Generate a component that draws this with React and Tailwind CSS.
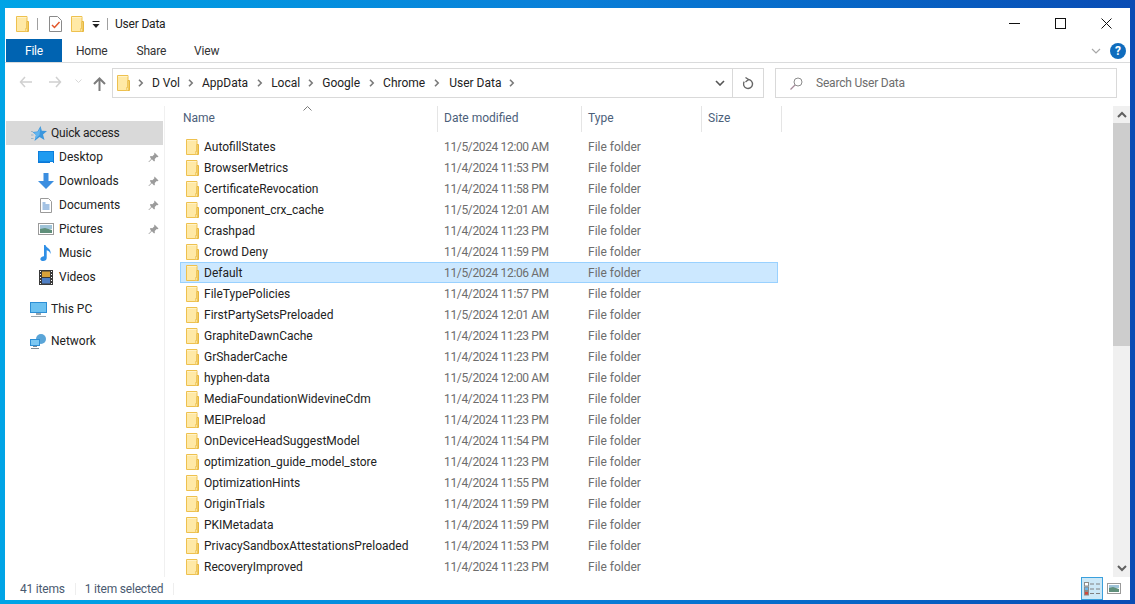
import React from "react";

const rows = [
  ["AutofillStates", "11/5/2024 12:00 AM"],
  ["BrowserMetrics", "11/4/2024 11:53 PM"],
  ["CertificateRevocation", "11/4/2024 11:58 PM"],
  ["component_crx_cache", "11/5/2024 12:01 AM"],
  ["Crashpad", "11/4/2024 11:23 PM"],
  ["Crowd Deny", "11/4/2024 11:59 PM"],
  ["Default", "11/5/2024 12:06 AM"],
  ["FileTypePolicies", "11/4/2024 11:57 PM"],
  ["FirstPartySetsPreloaded", "11/5/2024 12:01 AM"],
  ["GraphiteDawnCache", "11/4/2024 11:23 PM"],
  ["GrShaderCache", "11/4/2024 11:23 PM"],
  ["hyphen-data", "11/5/2024 12:00 AM"],
  ["MediaFoundationWidevineCdm", "11/4/2024 11:23 PM"],
  ["MEIPreload", "11/4/2024 11:23 PM"],
  ["OnDeviceHeadSuggestModel", "11/4/2024 11:54 PM"],
  ["optimization_guide_model_store", "11/4/2024 11:23 PM"],
  ["OptimizationHints", "11/4/2024 11:55 PM"],
  ["OriginTrials", "11/4/2024 11:59 PM"],
  ["PKIMetadata", "11/4/2024 11:59 PM"],
  ["PrivacySandboxAttestationsPreloaded", "11/4/2024 11:53 PM"],
  ["RecoveryImproved", "11/4/2024 11:23 PM"],
];

const Folder = ({ className = "" }) => (
  <svg width="13" height="16" viewBox="0 0 13 16" className={className}>
    <path d="M.5.5h10.500v15H.5z" fill="#ffe9a6" stroke="#eec14f" />
    <path d="M1 1h9.500v1H1z" fill="#fff2c6" />
    <path d="M11 5.500h1.500v10H11z" fill="#fde48f" stroke="#e6b63f" />
    <path d="M9.500 12.500H11v3H9.500z" fill="#fff3c4" stroke="#eec14f" strokeWidth=".7" />
  </svg>
);

const Pin = () => (
  <svg width="11" height="11" viewBox="0 0 11 11">
    <path d="M6.500.500l4 4-1 .7-.8-.2-2 2 .2 1.700-.8.800-2.200-2.300-2.800 2.800-.8-.1 2.800-3L1.900 4.800l.8-.8 1.700.2 2-2-.2-.8z" fill="#9b9b9b" />
  </svg>
);

const Chevron = () => (
  <svg width="6" height="8" viewBox="0 0 6 8" className="shrink-0">
    <path d="M1 .8L4.200 4 1 7.200" fill="none" stroke="#7a7a7a" strokeWidth="1.600" />
  </svg>
);

const NavRow = ({ icon, label, pin, active, indent = true, className = "", labelClass = "ml-[4px]" }) => (
  <div className={`flex h-6 items-center ${active ? "bg-[#d9d9d9]" : ""} ${className}`}>
    <div className={`flex w-[18px] shrink-0 justify-center ${indent ? "ml-[32px]" : "ml-[24px]"}`}>{icon}</div>
    <span className={`${labelClass} flex-1`}>{label}</span>
    {pin && <span className="mr-[5px] flex"><Pin /></span>}
  </div>
);

export default function App() {
  return (
    <div
      className="flex h-[604px] w-[1135px] flex-col overflow-hidden bg-gradient-to-r from-[#00a4e6] via-[#0a7fd8] to-[#0a4cb4] pt-2 pr-[5px] pb-1 pl-[5px] text-[12px] leading-4 text-[#1a1a1a]"
      style={{ fontFamily: 'Roboto, "Liberation Sans", sans-serif' }}
    >
      <div className="flex min-h-0 flex-1 flex-col bg-white">
        {/* title bar */}
        <div className="flex h-[31px] shrink-0 items-center">
          <Folder className="ml-[11px]" />
          <div className="ml-[8px] h-[12px] w-px bg-[#a0a0a0]" />
          <svg width="13" height="16" viewBox="0 0 13 16" className="ml-[11px]">
            <path d="M.5.5h8l4 4v11H.5z" fill="#fff" stroke="#8a8a8a" />
            <path d="M3 9l2.500 2.500L10.500 6" fill="none" stroke="#e2572b" strokeWidth="1.500" />
          </svg>
          <Folder className="ml-[9px]" />
          <svg width="8" height="8" viewBox="0 0 8 8" className="ml-[8px] mt-[2px]">
            <path d="M.5 0h7v1h-7zM.5 3h7L4 7z" fill="#222" />
          </svg>
          <div className="ml-[7px] h-[12px] w-px bg-[#a0a0a0]" />
          <span className="ml-[7px] tracking-[-0.2px] text-[#222]">User Data</span>
          <div className="ml-auto flex h-full items-center">
            <svg width="11" height="11" viewBox="0 0 11 11" className="mr-[35px]"><path d="M0 5.500h11" stroke="#111" strokeWidth="1" /></svg>
            <svg width="11" height="11" viewBox="0 0 11 11" className="mr-[35px]"><rect x=".5" y=".5" width="10" height="10" fill="none" stroke="#111" /></svg>
            <svg width="11" height="11" viewBox="0 0 11 11" className="mr-[18px]"><path d="M.5.500l10 10M10.500.500l-10 10" stroke="#111" /></svg>
          </div>
        </div>
        {/* tabs */}
        <div className="flex h-[24px] shrink-0 items-start border-b border-[#dadbdc] tracking-[-0.2px]">
          <div className="ml-px flex h-[23px] w-[56px] items-center justify-center bg-[#0063b1] text-white">File</div>
          <div className="ml-[14px] flex h-[23px] items-center text-[#333]">Home</div>
          <div className="ml-[29px] flex h-[23px] items-center text-[#333]">Share</div>
          <div className="ml-[28px] flex h-[23px] items-center text-[#333]">View</div>
          <div className="ml-auto mr-[4px] flex h-[23px] items-center">
            <svg width="10" height="6" viewBox="0 0 10 6" className="mr-[9px]"><path d="M1 1l4 4 4-4" fill="none" stroke="#a8a8a8" strokeWidth="1.200" /></svg>
            <div className="flex h-4 w-4 items-center justify-center rounded-full bg-[#0f6cbd] text-[12px] font-bold text-white">?</div>
          </div>
        </div>
        {/* address bar */}
        <div className="flex h-[43px] shrink-0 items-start pt-[5px]">
          <svg width="13" height="12" viewBox="0 0 13 12" className="ml-[14px] mt-[8px]"><path d="M6 1L1.500 6 6 11M1.500 6H13" fill="none" stroke="#d0d0d0" strokeWidth="1.500" /></svg>
          <svg width="13" height="12" viewBox="0 0 13 12" className="ml-[17px] mt-[8px]"><path d="M7 1l4.500 5L7 11M11.500 6H0" fill="none" stroke="#d0d0d0" strokeWidth="1.500" /></svg>
          <svg width="7" height="5" viewBox="0 0 7 5" className="ml-[13px] mt-[11px]"><path d="M.5.500l3 3 3-3" fill="none" stroke="#d8d8d8" /></svg>
          <svg width="13" height="14" viewBox="0 0 13 14" className="ml-[11px] mt-[9px]"><path d="M6.500 14V2M1 7l5.500-5.500L12 7" fill="none" stroke="#7c7c7c" strokeWidth="2" /></svg>
          <div className="ml-[6px] flex h-[30px] w-[621px] items-center border border-[#d9d9d9] pl-[4px]">
            <Folder />
            <div className="ml-[8px] flex items-center text-[#222]">
              <Chevron /><span className="ml-[8px]">D Vol</span>
              <span className="ml-[8px]"><Chevron /></span><span className="ml-[8px]">AppData</span>
              <span className="ml-[9px]"><Chevron /></span><span className="ml-[8px]">Local</span>
              <span className="ml-[8px]"><Chevron /></span><span className="ml-[8px]">Google</span>
              <span className="ml-[9px]"><Chevron /></span><span className="ml-[8px]">Chrome</span>
              <span className="ml-[9px]"><Chevron /></span><span className="ml-[9px]">User Data</span>
              <span className="ml-[8px]"><Chevron /></span>
            </div>
            <div className="ml-auto flex h-full w-[25px] items-center justify-center">
              <svg width="10" height="6" viewBox="0 0 10 6"><path d="M1 1l4 4 4-4" fill="none" stroke="#555" strokeWidth="1.600" /></svg>
            </div>
          </div>
          <div className="flex h-[30px] w-[31px] items-center justify-center border border-l-0 border-[#d9d9d9]">
            <svg width="12" height="13" viewBox="0 0 12 13"><path d="M6 2.500a4.500 4.500 0 1 1-3.800 2.100" fill="none" stroke="#666" strokeWidth="1.400" /><path d="M3.500.500L6.500 2.500 3.500 5" fill="none" stroke="#666" strokeWidth="1.300" /></svg>
          </div>
          <div className="ml-[11px] flex h-[30px] w-[342px] items-center border border-[#d9d9d9] text-[#6d6d6d]">
            <svg width="13" height="13" viewBox="0 0 13 13" className="ml-[14px]"><circle cx="8" cy="5" r="4" fill="none" stroke="#8c8c8c" /><path d="M5 8L.500 12.500" stroke="#a58a9a" strokeWidth="1.200" /></svg>
            <span className="ml-[13px] tracking-[-0.2px]">Search User Data</span>
          </div>
        </div>
        {/* main */}
        <div className="flex min-h-0 flex-1">
          <div className="flex w-[160px] shrink-0 flex-col border-r border-[#f0f0f0] pt-[15px] text-[#222]">
            <NavRow active indent={false} className="ml-px mr-px" labelClass="ml-[3px] tracking-[-0.2px]" icon={
              <svg width="16" height="15" viewBox="0 0 16 15"><path d="M9.500 0l1.300 4.700L16 5l-4 3.500 1.500 5.500-5-3L3.500 15l1.500-6L1.500 6l5-.5z" fill="#3a96dd" /><path d="M9.500 1.500l-1 7.500L3.800 13.500 5 9 2.500 6.500l4.300-.5z" fill="#62b4ee" /><path d="M0 5.500h2M0 9h2.500M0 12.500h2.500" stroke="#9db4c6" /></svg>
            } label="Quick access" />
            <NavRow pin icon={
              <svg width="16" height="13" viewBox="0 0 16 13"><rect width="16" height="12" fill="#0a78d7" /><rect x=".8" y=".8" width="14.400" height="9.500" fill="#1f9bf0" /><rect x="12" y="11" width="3" height="1" fill="#fff" /></svg>
            } label="Desktop" />
            <NavRow pin icon={
              <svg width="16" height="16" viewBox="0 0 16 16"><path d="M5.500 0h5v8H16l-8 8-8-8h5.500z" fill="#3b8ee0" /></svg>
            } label="Downloads" />
            <NavRow pin icon={
              <svg width="12" height="15" viewBox="0 0 12 15"><path d="M.5.500h8l3 3v11H.5z" fill="#fff" stroke="#9a9a9a" /><path d="M2.500 5h3M2.500 7h7M2.500 9h7M2.500 11h7" stroke="#4a86c8" /></svg>
            } label="Documents" />
            <NavRow pin icon={
              <svg width="16" height="12" viewBox="0 0 16 12"><rect x=".5" y=".5" width="15" height="11" fill="#fff" stroke="#9a9a9a" /><rect x="2" y="2" width="12" height="4" fill="#9fc3d8" /><path d="M2 6l5-1 7 2v3H2z" fill="#5f8f7a" /></svg>
            } label="Pictures" />
            <NavRow icon={
              <svg width="12" height="16" viewBox="0 0 12 16"><path d="M4 0h1.500c.5 3 6 3.500 5 9-.3-2-2-3.500-3.800-3.800V13c0 1.800-1.500 3-3.500 3S0 15 .5 13.500 3 11 4 11.300z" fill="#2f8fe6" /></svg>
            } label="Music" />
            <NavRow icon={
              <svg width="14" height="15" viewBox="0 0 14 15"><rect width="14" height="15" fill="#3a3a3a" /><rect x="3" y="1.500" width="8" height="5.500" fill="#d9a23a" /><rect x="3" y="8" width="8" height="5.500" fill="#4f7fc4" /><path d="M1 1h1v1H1zM1 4h1v1H1zM1 7h1v1H1zM1 10h1v1H1zM1 13h1v1H1zM12 1h1v1h-1zM12 4h1v1h-1zM12 7h1v1h-1zM12 10h1v1h-1zM12 13h1v1h-1z" fill="#fff" /></svg>
            } label="Videos" />
            <NavRow indent={false} className="mt-[8px]" icon={
              <svg width="17" height="15" viewBox="0 0 17 15"><rect width="17" height="11" fill="#2d8fd5" /><rect x="1" y="1" width="15" height="9" fill="#6cc1f0" /><path d="M6 11h5v2H6zM1 14h15v1H1z" fill="#9aa5ad" /></svg>
            } label="This PC" />
            <NavRow indent={false} className="mt-[8px]" icon={
              <svg width="17" height="15" viewBox="0 0 17 15"><circle cx="11" cy="5" r="5" fill="#5aa5d8" /><rect x="0" y="5" width="10" height="7" fill="#2d8fd5" /><rect x="1" y="6" width="8" height="5" fill="#7cc8f2" /><path d="M3 12h4v1H3zM1 14h8v1H1z" fill="#7f8b92" /></svg>
            } label="Network" />
          </div>
          {/* list */}
          <div className="relative min-w-0 flex-1 pl-[15px]">
            <svg width="9" height="5" viewBox="0 0 9 5" className="absolute left-[138px] top-0"><path d="M.5 4.500l4-4 4 4" fill="none" stroke="#7a7a7a" /></svg>
            <div className="flex h-[26px] items-stretch text-[#4c607a]">
              <div className="w-[258px] border-r border-[#e5e5e5] pl-[3px] pt-[4px]">Name</div>
              <div className="w-[144px] border-r border-[#e5e5e5] pl-[6px] pt-[4px]">Date modified</div>
              <div className="w-[120px] border-r border-[#e5e5e5] pl-[6px] pt-[4px]">Type</div>
              <div className="w-[80px] border-r border-[#e5e5e5] pl-[6px] pt-[4px]">Size</div>
            </div>
            <div className="mt-[4px] w-[598px]">
              {rows.map(([name, date]) => {
                const selected = name === "Default";
                return (
                  <div key={name} className={`flex h-[21px] items-center border ${selected ? "border-[#99d1ff] bg-[#cce8ff]" : "border-transparent"}`}>
                    <Folder className="ml-[5px] shrink-0" />
                    <span className="ml-[5px] w-[240px] whitespace-nowrap text-[#222]">{name}</span>
                    <span className="w-[144px] tracking-[-0.35px] text-[#6d6d6d]">{date}</span>
                    <span className="text-[#6d6d6d]">File folder</span>
                  </div>
                );
              })}
            </div>
          </div>
          {/* scrollbar */}
          <div className="mr-0 flex w-[17px] shrink-0 flex-col bg-[#f0f0f0]">
            <div className="flex h-[17px] items-center justify-center">
              <svg width="10" height="7" viewBox="0 0 10 7"><path d="M1 6l4-4 4 4" fill="none" stroke="#606060" strokeWidth="2" /></svg>
            </div>
            <div className="h-[223px] bg-[#cdcdcd]" />
            <div className="mt-auto flex h-[17px] items-center justify-center">
              <svg width="10" height="7" viewBox="0 0 10 7"><path d="M1 1l4 4 4-4" fill="none" stroke="#606060" strokeWidth="2" /></svg>
            </div>
          </div>
        </div>
        {/* status */}
        <div className="flex h-[23px] shrink-0 items-center tracking-[-0.2px] text-[#4a5a70]">
          <span className="ml-[15px]">41 items</span>
          <div className="ml-[10px] h-[12px] w-px bg-[#eeeeee]" />
          <span className="ml-[9px]">1 item selected</span>
          <div className="ml-[10px] h-[12px] w-px bg-[#eeeeee]" />
          <div className="ml-auto mr-[9px] flex items-center gap-[4px]">
            <div className="flex h-[23px] w-[22px] items-center justify-center border border-[#3aa0dd] bg-[#cce8f7]">
              <svg width="16" height="14" viewBox="0 0 16 14"><rect x=".5" y=".5" width="4" height="3.500" fill="#fff" stroke="#8a8a8a" /><rect x=".5" y="5" width="4" height="3.500" fill="#6fb4e8" stroke="#8a8a8a" /><rect x=".5" y="9.500" width="4" height="3.500" fill="#d0483a" stroke="#8a8a8a" /><path d="M6 2h4M12 2h4M6 7h4M12 7h4M6 11.500h4M12 11.500h4" stroke="#808080" /></svg>
            </div>
            <svg width="14" height="11" viewBox="0 0 14 11"><rect x=".5" y=".5" width="13" height="10" fill="#fff" stroke="#9a9a9a" /><rect x="2" y="2" width="10" height="3" fill="#9fc3d8" /><path d="M2 5l4-1 6 2v3H2z" fill="#5f8f7a" /></svg>
          </div>
        </div>
      </div>
    </div>
  );
}
